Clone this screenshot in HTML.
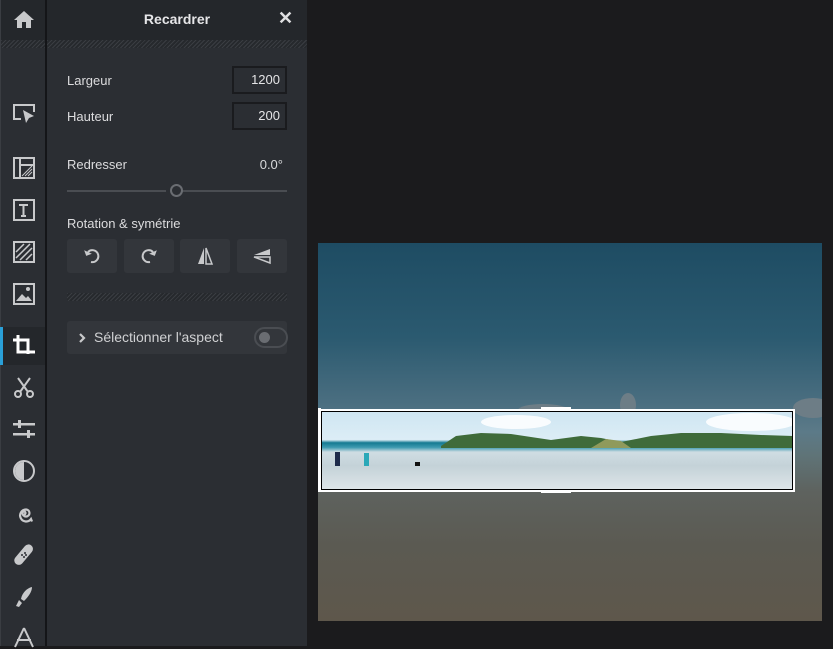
<!DOCTYPE html>
<html><head><meta charset="utf-8"><style>
*{margin:0;padding:0;box-sizing:border-box}
body{width:833px;height:646px;background:#1b1b1d;font-family:"Liberation Sans",sans-serif;overflow:hidden;position:relative;color:#d8d9db}
.rail{position:absolute;left:0;top:0;width:45px;height:646px;background:#2b2e33;border-left:1px solid #3a3d42}
.sep{position:absolute;left:45px;top:0;width:2px;height:646px;background:#141518}
.panel{position:absolute;left:47px;top:0;width:260px;height:646px;background:#2b2e33}
.hdr{position:absolute;top:0;height:40px;background:#24272b}
.stripe{position:absolute;height:8px;background:repeating-linear-gradient(135deg,#3a3d42 0 1px,#26292d 1px 3px)}
.ic{position:absolute;left:11px;width:24px;height:24px}
.lbl{position:absolute;left:20px;font-size:13px;color:#dcdcde}
.inp{position:absolute;left:185px;width:55px;height:28px;border:2px solid #1a1b1e;background:#2b2e33;text-align:right;padding:4px 5px;font-size:13px;color:#e4e4e6}
.btn{position:absolute;top:239px;width:50px;height:34px;background:#33363b;border-radius:3px}
.btn svg{position:absolute;left:15px;top:7px}
</style></head><body>
<div class="rail">
 <div class="hdr" style="left:0;width:44px"></div>
 <div class="stripe" style="left:0;top:40px;width:44px"></div>
 <svg class="ic" style="top:8px" viewBox="0 0 24 24"><path d="M12 3 2 12h3v8h5v-6h4v6h5v-8h3z" fill="#c8c9cb"/></svg>
 <svg class="ic" style="top:102px" viewBox="0 0 24 24" fill="none" stroke="#c8c9cb" stroke-width="2"><path d="M9 17H2V3h20v7"/><path d="M11 8l11 6-5 2-3 5z" fill="#c8c9cb" stroke="none"/></svg>
 <svg class="ic" style="top:156px" viewBox="0 0 24 24" fill="none" stroke="#c8c9cb" stroke-width="2"><rect x="2" y="2" width="20" height="20"/><path d="M8 2v20M8 9h14"/><path d="M10 20l10-10M13 20l7-7M16 20l4-4" stroke-width="1"/></svg>
 <svg class="ic" style="top:198px" viewBox="0 0 24 24" fill="none" stroke="#c8c9cb" stroke-width="2"><rect x="2" y="2" width="20" height="20"/><path d="M7 7h9M11.5 7v11M9 18h5"/></svg>
 <svg class="ic" style="top:240px" viewBox="0 0 24 24" fill="none" stroke="#c8c9cb" stroke-width="2"><rect x="2" y="2" width="20" height="20"/><path d="M4 12 12 4M4 18 18 4M8 20 20 8M14 20l6-6" stroke-width="1.5"/></svg>
 <svg class="ic" style="top:282px" viewBox="0 0 24 24" fill="none" stroke="#c8c9cb" stroke-width="2"><rect x="2" y="2" width="20" height="20"/><path d="M4 19l6-7 4 4 2-2 4 5z" fill="#c8c9cb" stroke="none"/><circle cx="16" cy="7" r="2" fill="#c8c9cb" stroke="none"/></svg>
 <div style="position:absolute;left:-1px;top:327px;width:46px;height:38px;background:#24272b"></div>
 <div style="position:absolute;left:-1px;top:327px;width:3px;height:38px;background:#2aa0d8"></div>
 <svg class="ic" style="top:334px" viewBox="0 0 24 24" fill="none" stroke="#fff" stroke-width="3"><path d="M6 1v17h17M1 6h15v14"/></svg>
 <svg class="ic" style="top:375px" viewBox="0 0 24 24" fill="none" stroke="#c8c9cb" stroke-width="2"><circle cx="6" cy="19" r="3"/><circle cx="18" cy="19" r="3"/><path d="M8 17 18 3M16 17 6 3"/></svg>
 <svg class="ic" style="top:418px" viewBox="0 0 24 24" fill="#c8c9cb"><rect x="1" y="5" width="22" height="2.5"/><rect x="6" y="2" width="3" height="8"/><rect x="1" y="15" width="22" height="2.5"/><rect x="15" y="12" width="3" height="8"/></svg>
 <svg class="ic" style="top:459px" viewBox="0 0 24 24"><circle cx="12" cy="12" r="10" fill="none" stroke="#c8c9cb" stroke-width="2"/><path d="M12 3a9 9 0 0 0 0 18z" fill="#c8c9cb"/></svg>
 <svg class="ic" style="top:502px" viewBox="0 0 24 24" fill="none" stroke="#c8c9cb" stroke-width="2.2"><path d="M12 12.5a1.5 1.5 0 1 0-1.5-1.5M10.5 11a3.5 3.5 0 1 0 3.5-3.5M14 7.5a6 6 0 1 0 5 9.5l1 2.5"/></svg>
 <svg class="ic" style="top:543px" viewBox="0 0 24 24"><rect x="7" y="0" width="9" height="24" rx="4.5" transform="rotate(40 12 12)" fill="#c8c9cb"/><g fill="#2b2e33"><circle cx="10" cy="12" r="1"/><circle cx="13" cy="10" r="1"/><circle cx="12" cy="14" r="1"/><circle cx="14" cy="12" r="1"/></g></svg>
 <svg class="ic" style="top:585px" viewBox="0 0 24 24" fill="#c8c9cb"><path d="M20 2c-5 1-10 6-11 12l3 2c4-4 8-9 8-14zM7 15l3 3-3 4-3-1z"/></svg>
 <svg class="ic" style="top:625px" viewBox="0 0 24 24" fill="none" stroke="#c8c9cb" stroke-width="2"><path d="M12 3 3 22M12 3l9 19M5 15h14"/></svg>
</div>
<div class="sep"></div>
<div class="panel">
 <div class="hdr" style="left:0;width:260px"></div>
 <div class="stripe" style="left:0;top:40px;width:260px"></div>
 <div style="position:absolute;left:0;width:260px;top:11px;text-align:center;font-weight:bold;font-size:14px;color:#e6e6e8">Recardrer</div>
 <div style="position:absolute;left:231px;top:8px;font-size:18px;font-weight:bold;color:#e0e0e2">✕</div>
 <div class="lbl" style="top:73px">Largeur</div>
 <div class="inp" style="top:66px">1200</div>
 <div class="lbl" style="top:109px">Hauteur</div>
 <div class="inp" style="top:102px">200</div>
 <div class="lbl" style="top:157px">Redresser</div>
 <div style="position:absolute;right:24px;top:157px;font-size:13px">0.0°</div>
 <div style="position:absolute;left:20px;top:190px;width:99px;height:2px;background:#4a4d52"></div>
 <div style="position:absolute;left:134px;top:190px;width:106px;height:2px;background:#4a4d52"></div>
 <div style="position:absolute;left:123px;top:184px;width:13px;height:13px;border:2px solid #6a6d72;border-radius:50%"></div>
 <div class="lbl" style="top:216px">Rotation &amp; symétrie</div>
 <div class="btn" style="left:20px"><svg width="20" height="20" viewBox="0 0 20 20" fill="none" stroke="#c8c9cb" stroke-width="2"><path d="M6 6a6 6 0 1 1 3 10"/><path d="M3 3v6h6" fill="#c8c9cb" stroke="none" transform="rotate(-20 6 6)"/></svg></div>
 <div class="btn" style="left:77px"><svg width="20" height="20" viewBox="0 0 20 20" fill="none" stroke="#c8c9cb" stroke-width="2"><path d="M14 6a6 6 0 1 0-3 10"/><path d="M17 3v6h-6" fill="#c8c9cb" stroke="none" transform="rotate(20 14 6)"/></svg></div>
 <div class="btn" style="left:133px"><svg width="20" height="20" viewBox="0 0 20 20" fill="#c8c9cb"><path d="M9 2 3 18h6z"/><path d="M11 2v16h6z" fill="none" stroke="#c8c9cb" stroke-width="1.5"/></svg></div>
 <div class="btn" style="left:190px"><svg width="20" height="20" viewBox="0 0 20 20" fill="#c8c9cb"><path d="M18 3 2 9h16z"/><path d="M18 11H2l16 6z" fill="none" stroke="#c8c9cb" stroke-width="1.5"/></svg></div>
 <div class="stripe" style="left:20px;top:293px;width:220px"></div>
 <div style="position:absolute;left:20px;top:321px;width:220px;height:33px;background:#33363b;border-radius:3px">
  <svg style="position:absolute;left:11px;top:12px" width="8" height="10" viewBox="0 0 8 10"><path d="M2 1l4 4-4 4" fill="none" stroke="#c8c9cb" stroke-width="2.2"/></svg>
  <div style="position:absolute;left:27px;top:8px;font-size:14px;color:#d0d1d3">Sélectionner l'aspect</div>
  <div style="position:absolute;left:187px;top:6px;width:34px;height:21px;border:2px solid #4a4d52;border-radius:11px"><div style="position:absolute;left:3px;top:3px;width:11px;height:11px;border-radius:50%;background:#6a6d72"></div></div>
 </div>
</div>
<!-- image -->
<div style="position:absolute;left:318px;top:243px;width:504px;height:378px;background:linear-gradient(#1e4c63 0%,#2b5a70 25%,#4a6e80 42%,#5c7a88 50%,#5f7478 56%,#5e625e 66%,#5b5a52 80%,#5e574b 100%)"></div>
<svg style="position:absolute;left:318px;top:380px" width="504" height="40"><g fill="#6d7d86"><ellipse cx="225" cy="30" rx="25" ry="6"/><ellipse cx="310" cy="25" rx="8" ry="12"/><ellipse cx="495" cy="28" rx="20" ry="10"/></g></svg>
<div style="position:absolute;left:321px;top:412px;width:472px;height:77px;overflow:hidden;background:linear-gradient(#cfe6f2 0%,#dcedf6 36%,#147a92 40%,#3d9ab0 46%,#cfdde3 52%,#c4d2d8 70%,#dde5e8 100%)">
 <svg width="472" height="77" viewBox="0 0 472 77" style="position:absolute;left:0;top:0"><path d="M120 34 135 24 160 21 190 22 230 28 260 24 280 26 300 30 330 24 360 21 400 21 440 23 472 24V36H120z" fill="#3f6b3a"/><path d="M270 36 285 27 300 29 310 36z" fill="#8f9a5c"/><g fill="#fff" opacity=".85"><ellipse cx="195" cy="10" rx="35" ry="7"/><ellipse cx="430" cy="10" rx="45" ry="9"/></g><g fill="#1d2a4a"><rect x="14" y="40" width="5" height="14"/><rect x="43" y="41" width="5" height="13" fill="#2aa8b8"/><rect x="94" y="50" width="5" height="4" fill="#111"/></g></svg>
</div>
<div style="position:absolute;left:319px;top:409px;width:476px;height:83px;border:2px solid #fff;outline:1px solid #000;outline-offset:-3px"></div>
<div style="position:absolute;left:318px;top:408px;width:12px;height:84px;border-left:3px solid #fff"></div>
<div style="position:absolute;left:541px;top:407px;width:30px;height:3px;background:#fff"></div>
<div style="position:absolute;left:541px;top:490px;width:30px;height:3px;background:#fff"></div>
</body></html>
